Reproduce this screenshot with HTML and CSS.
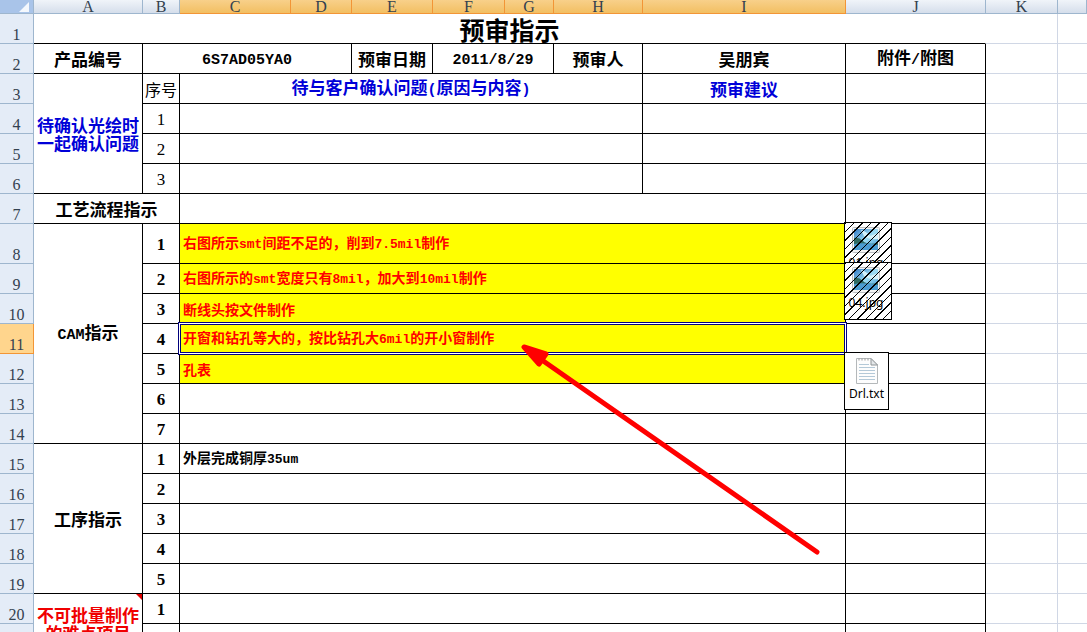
FILE: index.html
```html
<!DOCTYPE html>
<html lang="zh-CN">
<head>
  <meta charset="UTF-8">
  <meta name="viewport" content="width=device-width, initial-scale=1.0">
  <title>预审指示</title>
  <link rel="stylesheet" href="styles.css">
</head>
<body>

  <main class="workbook">
    <table class="sheet">
      <colgroup>
        <col class="col-head"><col class="col-a"><col class="col-b"><col class="col-c"><col class="col-d"><col class="col-e"><col class="col-f"><col class="col-g"><col class="col-h"><col class="col-i"><col class="col-j"><col class="col-k"><col>
      </colgroup>
      <thead>
        <tr>
          <th class="corner"><svg width="10" height="10" viewBox="0 0 10 10"><path d="M10 0V10H0Z" fill="#f4f8fd"/></svg></th>
          <th>A</th>
          <th>B</th>
          <th class="on">C</th>
          <th class="on">D</th>
          <th class="on">E</th>
          <th class="on">F</th>
          <th class="on">G</th>
          <th class="on">H</th>
          <th class="on">I</th>
          <th>J</th>
          <th>K</th>
          <th></th>
        </tr>
      </thead>
      <tbody>
        <tr>
          <th>1</th>
          <td class="title" colspan="10">预审指示</td>
          <td class="blank"></td><td class="blank"></td>
        </tr>
        <tr class="bold">
          <th>2</th>
          <td>产品编号</td>
          <td colspan="3"><span class="latin">6S7AD05YA0</span></td>
          <td>预审日期</td>
          <td colspan="2"><span class="latin">2011/8/29</span></td>
          <td>预审人</td>
          <td>吴朋宾</td>
          <td>附件<span class="latin">/</span>附图</td>
          <td class="blank"></td><td class="blank"></td>
        </tr>
        <tr>
          <th>3</th>
          <td class="bold blue" rowspan="4">待确认光绘时<br>一起确认问题</td>
          <td class="serial">序号</td>
          <td class="bold blue" colspan="6">待与客户确认问题<span class="latin">(</span>原因与内容<span class="latin">)</span></td>
          <td class="bold blue">预审建议</td>
          <td></td>
          <td class="blank"></td><td class="blank"></td>
        </tr>
        <tr>
          <th>4</th>
          <td class="num">1</td>
          <td colspan="6"></td>
          <td></td>
          <td></td>
          <td class="blank"></td><td class="blank"></td>
        </tr>
        <tr>
          <th>5</th>
          <td class="num">2</td>
          <td colspan="6"></td>
          <td></td>
          <td></td>
          <td class="blank"></td><td class="blank"></td>
        </tr>
        <tr>
          <th>6</th>
          <td class="num">3</td>
          <td colspan="6"></td>
          <td></td>
          <td></td>
          <td class="blank"></td><td class="blank"></td>
        </tr>
        <tr>
          <th>7</th>
          <td class="bold" colspan="2">工艺流程指示</td>
          <td colspan="7"></td>
          <td></td>
          <td class="blank"></td><td class="blank"></td>
        </tr>
        <tr class="tall">
          <th>8</th>
          <td class="bold" rowspan="7"><span class="latin">CAM</span>指示</td>
          <td class="num bold">1</td>
          <td class="note hot" colspan="7">右图所示<span class="latin">smt</span>间距不足的，削到<span class="latin">7.5mil</span>制作</td>
          <td class="holder">
            <div class="attachment striped">
              <svg width="28" height="26" viewBox="0 0 28 26">
                <defs>
                  <linearGradient id="sky" x1="0" y1="0" x2="1" y2="1">
                    <stop offset="0" stop-color="#2f78c4"/>
                    <stop offset="0.5" stop-color="#9fdcf2"/>
                    <stop offset="1" stop-color="#3b93cf"/>
                  </linearGradient>
                </defs>
                <g id="photo">
                  <rect x="0.5" y="0.5" width="27" height="25" rx="1" fill="#f3f3f3" stroke="#b9bdc0"/>
                  <rect x="2" y="2" width="24" height="21" fill="url(#sky)"/>
                  <path d="M9 3Q14 4 18 9L26 6V12Q18 13 12 9Z" fill="#d4f1fa"/>
                  <path d="M2 11Q7 10 11 14T26 16V18H2Z" fill="#2d6a61"/>
                  <path d="M2 17Q12 15 26 18V23H2Z" fill="#4b9bd0"/>
                </g>
              </svg>
              <span>01.jpg</span>
            </div>
          </td>
          <td class="blank"></td><td class="blank"></td>
        </tr>
        <tr>
          <th>9</th>
          <td class="num bold">2</td>
          <td class="note hot" colspan="7">右图所示的<span class="latin">smt</span>宽度只有<span class="latin">8mil</span>，加大到<span class="latin">10mil</span>制作</td>
          <td class="holder">
            <div class="attachment striped">
              <svg width="28" height="26" viewBox="0 0 28 26">
                <use href="#photo"/>
              </svg>
              <span>04.jpg</span>
            </div>
          </td>
          <td class="blank"></td><td class="blank"></td>
        </tr>
        <tr>
          <th>10</th>
          <td class="num bold">3</td>
          <td class="note hot" colspan="7">断线头按文件制作</td>
          <td></td>
          <td class="blank"></td><td class="blank"></td>
        </tr>
        <tr>
          <th class="on">11</th>
          <td class="num bold">4</td>
          <td class="note hot selected" colspan="7">开窗和钻孔等大的，按比钻孔大<span class="latin">6mil</span>的开小窗制作
            <svg class="arrow" width="300" height="213" viewBox="0 0 300 213">
              <path d="M18 14L296 208" stroke="#f00" stroke-width="5" stroke-linecap="round"/>
              <path d="M3 3L25 10L18 20Z" fill="#f00" stroke="#f00" stroke-width="5" stroke-linejoin="round"/>
            </svg>
          </td>
          <td></td>
          <td class="blank"></td><td class="blank"></td>
        </tr>
        <tr>
          <th>12</th>
          <td class="num bold">5</td>
          <td class="note hot" colspan="7">孔表</td>
          <td class="holder">
            <div class="attachment">
              <svg width="22" height="27" viewBox="0 0 22 27">
                <path d="M0.5 1.5H15L21.5 8V26.5H0.5Z" fill="#fdfdfd" stroke="#b4b8ba"/>
                <path d="M15 1.5V8H21.5Z" fill="#e4e7e9" stroke="#8f9496"/>
                <path d="M2.5 2.5h1M5.5 2.5h1M8.5 2.5h1M11.5 2.5h1" stroke="#999" stroke-width="2"/>
                <path d="M3 7.5H13M3 10.5H19M3 13.5H19M3 16.5H19M3 19.5H19M3 22.5H19" stroke="#b4c9d8"/>
              </svg>
              <span>Drl.txt</span>
            </div>
          </td>
          <td class="blank"></td><td class="blank"></td>
        </tr>
        <tr>
          <th>13</th>
          <td class="num bold">6</td>
          <td colspan="7"></td>
          <td></td>
          <td class="blank"></td><td class="blank"></td>
        </tr>
        <tr>
          <th>14</th>
          <td class="num bold">7</td>
          <td colspan="7"></td>
          <td></td>
          <td class="blank"></td><td class="blank"></td>
        </tr>
        <tr>
          <th>15</th>
          <td class="bold" rowspan="5">工序指示</td>
          <td class="num bold">1</td>
          <td class="note" colspan="7">外层完成铜厚<span class="latin">35um</span></td>
          <td></td>
          <td class="blank"></td><td class="blank"></td>
        </tr>
        <tr>
          <th>16</th>
          <td class="num bold">2</td>
          <td colspan="7"></td>
          <td></td>
          <td class="blank"></td><td class="blank"></td>
        </tr>
        <tr>
          <th>17</th>
          <td class="num bold">3</td>
          <td colspan="7"></td>
          <td></td>
          <td class="blank"></td><td class="blank"></td>
        </tr>
        <tr>
          <th>18</th>
          <td class="num bold">4</td>
          <td colspan="7"></td>
          <td></td>
          <td class="blank"></td><td class="blank"></td>
        </tr>
        <tr>
          <th>19</th>
          <td class="num bold">5</td>
          <td colspan="7"></td>
          <td></td>
          <td class="blank"></td><td class="blank"></td>
        </tr>
        <tr>
          <th>20</th>
          <td class="bold red commented" rowspan="2">不可批量制作<br>的难点项目</td>
          <td class="num bold">1</td>
          <td colspan="7"></td>
          <td></td>
          <td class="blank"></td><td class="blank"></td>
        </tr>
        <tr>
          <th></th>
          <td></td>
          <td colspan="7"></td>
          <td></td>
          <td class="blank"></td><td class="blank"></td>
        </tr>
      </tbody>
    </table>
  </main>

</body>
</html>
```
FILE: styles.css
```css
body {
  margin: 0;
  background-color: #fff;
  color: #000;
  font-family: "Noto Sans CJK SC", sans-serif;
  font-size: 17px;
  line-height: 18px;
}

.workbook {
  height: 100vh;
  overflow: hidden;
}

.sheet {
  width: 100%;
  table-layout: fixed;
  border-collapse: separate;
  border-spacing: 0;
}

/* column widths */
.col-head { width: 34px; }
.col-a { width: 109px; }
.col-b { width: 37px; }
.col-c { width: 111px; }
.col-d { width: 61px; }
.col-e { width: 81px; }
.col-f { width: 72px; }
.col-g { width: 49px; }
.col-h { width: 89px; }
.col-i { width: 203px; }
.col-j { width: 140px; }
.col-k { width: 72px; }

th, td {
  box-sizing: border-box;
  height: 30px;
  padding: 0;
  border-right: 1px solid #000;
  border-bottom: 1px solid #000;
  text-align: center;
  vertical-align: middle;
  white-space: nowrap;
}

.tall td, .tall th {
  height: 40px;
}

/* row and column headings */
th {
  background-color: #e4ecf7;
  border-color: #9eb6ce;
  color: #33414f;
  font-family: "Liberation Serif", serif;
  font-size: 16px;
  font-weight: normal;
}

thead th {
  height: 14px;
  line-height: 12px;
  background-image: linear-gradient(#f0f4f9, #d5deeb);
}

tbody th {
  vertical-align: bottom;
  line-height: 16px;
}

th.on {
  background-color: #ffd58d;
  border-color: #f29536;
}

thead th.on {
  background-image: linear-gradient(#f8d08a, #f2bf62);
}

.corner {
  background-image: linear-gradient(#a9c4e9, #a9c4e9);
}

.corner svg {
  display: block;
  margin-left: auto;
  margin-right: 4px;
}

.title {
  border-right-color: transparent;
  font-size: 25px;
  font-weight: bold;
  line-height: 28px;
}

.blank {
  border-color: #d0d7e5;
}

.blank:last-child {
  border-right: none;
}

.bold { font-weight: bold; }
.blue { color: #0000d8; }
.red { color: #f00000; }

.serial {
  font-size: 16px;
}

.num {
  padding-top: 2px;
  font-family: "Liberation Serif", serif;
  font-size: 17px;
}

.latin {
  font-family: "Liberation Mono", monospace;
  font-size: 15px;
}

.note {
  padding-left: 3px;
  font-size: 14px;
  font-weight: bold;
  text-align: left;
}

.note .latin {
  font-size: 13px;
}

.hot {
  background-color: #ff0;
  color: #f00;
}

/* active cell frame */
.selected {
  position: relative;
}

.selected::after {
  content: "";
  position: absolute;
  inset: -2px;
  border: 1px solid #00007c;
  box-shadow: inset 0 0 0 1px #fff, inset 0 0 0 2px #00007c;
}

.arrow {
  position: absolute;
  left: 341px;
  top: 20px;
  z-index: 2;
}

/* embedded files */
.holder {
  position: relative;
}

.attachment {
  position: absolute;
  left: -2px;
  top: -2px;
  z-index: 1;
  box-sizing: border-box;
  width: 45px;
  height: 58px;
  padding-top: 4px;
  display: flex;
  flex-direction: column;
  align-items: center;
  gap: 2px;
  border: 1px solid #000;
  background-color: #fff;
  font-family: "Noto Sans", sans-serif;
  font-size: 12px;
  line-height: 16px;
}

.attachment svg {
  flex: none;
}

.striped {
  width: 48px;
  padding-right: 4px;
}

.striped::after {
  content: "";
  position: absolute;
  inset: 0;
  background-image: repeating-linear-gradient(135deg, #000 0 1px, transparent 1px 6px);
}

/* comment marker */
.commented {
  position: relative;
}

.commented::after {
  content: "";
  position: absolute;
  top: 0;
  right: 0;
  border-top: 6px solid #e00000;
  border-left: 6px solid transparent;
}
```
